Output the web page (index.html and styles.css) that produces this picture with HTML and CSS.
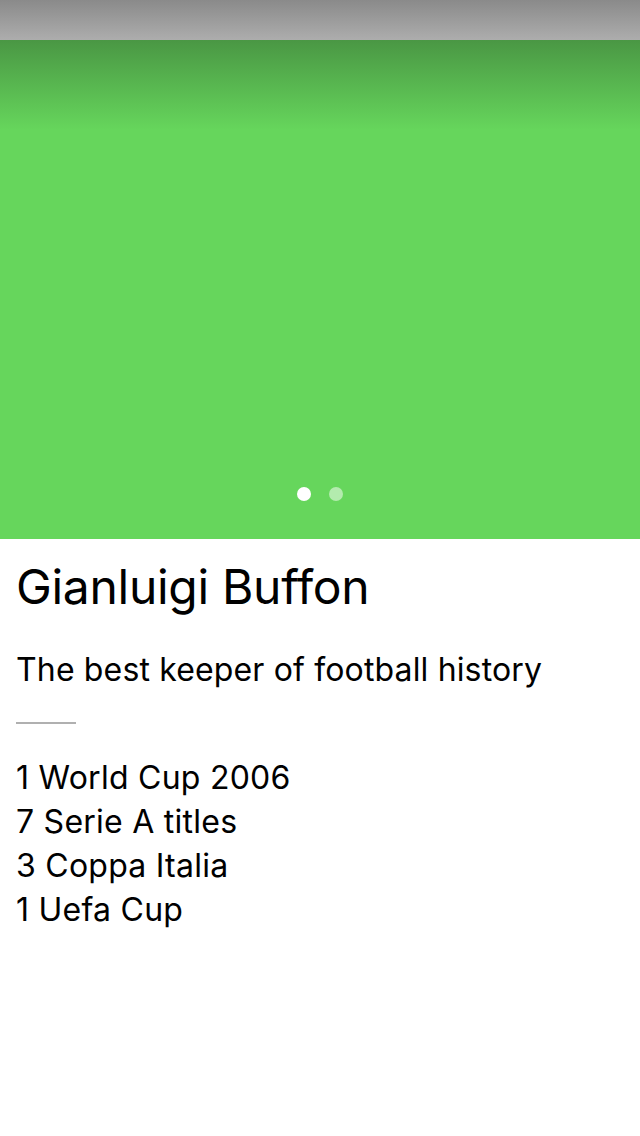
FILE: index.html
```html
<!DOCTYPE html>
<html>
<head>
<meta charset="utf-8">
<link rel="stylesheet" href="styles.css">
</head>
<body>
<div class="status-bar"></div>
<div class="hero">
  <div class="hero-shade"></div>
  <div class="dots">
    <span class="dot dot-active"></span>
    <span class="dot"></span>
  </div>
</div>
<div class="content">
  <h1 class="title">Gianluigi Buffon</h1>
  <p class="subtitle">The best keeper of football history</p>
  <div class="divider"></div>
  <ul class="stats">
    <li>1 World Cup 2006</li>
    <li>7 Serie A titles</li>
    <li>3 Coppa Italia</li>
    <li>1 Uefa Cup</li>
  </ul>
</div>
</body>
</html>
```
FILE: styles.css
```css
html, body {
  margin: 0;
  padding: 0;
  background: #ffffff;
}
body {
  width: 640px;
  height: 1136px;
  overflow: hidden;
  font-family: Inter, "Liberation Sans", sans-serif;
  color: #000;
}
.status-bar {
  height: 40px;
  background: linear-gradient(to bottom, #8a8a8a, #adadad);
}
.hero {
  height: 499px;
  background: #66d65c;
  display: flex;
  flex-direction: column;
  justify-content: space-between;
}
.hero-shade {
  height: 90px;
  background: linear-gradient(to bottom, #4a9744, #66d65c);
}
.dots {
  display: flex;
  justify-content: center;
  gap: 18px;
  padding-bottom: 38px;
  padding-left: 0;
}
.dot {
  width: 14px;
  height: 14px;
  border-radius: 50%;
  background: rgba(255,255,255,0.5);
}
.dot-active {
  background: #ffffff;
}
.content {
  padding: 0 16px;
}
.title {
  margin: 18px 0 0;
  font-weight: 400;
  font-size: 48px;
  line-height: 60px;
  letter-spacing: -0.3px;
}
.subtitle {
  margin: 33px 0 0;
  font-size: 32px;
  line-height: 40px;
  letter-spacing: 0.15px;
}
.divider {
  width: 60px;
  height: 2px;
  background: #b0b0b0;
  margin-top: 32px;
}
.stats {
  list-style: none;
  margin: 32px 0 0;
  padding: 0;
  font-size: 32px;
  line-height: 44px;
  letter-spacing: 0.25px;
}
```
